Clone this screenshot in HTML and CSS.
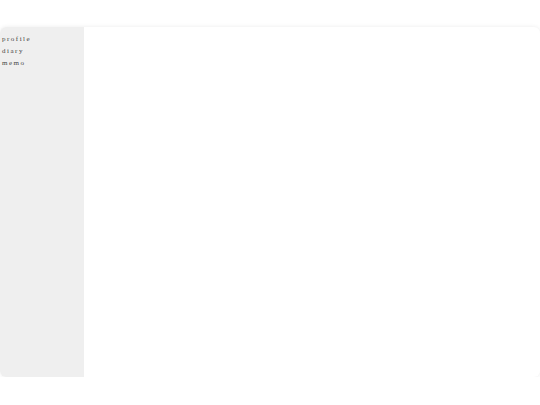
FILE: index.html
```html
<!DOCTYPE html>
<html>
<head>
<meta charset="utf-8">
<link rel="stylesheet" href="styles.css">
</head>
<body>
<div class="frame">
  <nav class="sidebar">
    <div class="item">profile</div>
    <div class="item">diary</div>
    <div class="item">memo</div>
  </nav>
  <main class="content"></main>
</div>
</body>
</html>
```
FILE: styles.css
```css
html, body {
  margin: 0;
  padding: 0;
  background: #ffffff;
}
body {
  padding-top: 27px;
}
.frame {
  display: flex;
  width: 540px;
  height: 350px;
  border-radius: 6px;
  overflow: hidden;
  background: #ffffff;
  box-shadow: 0 0 4px rgba(0, 0, 0, 0.08);
}
.sidebar {
  width: 84px;
  flex: none;
  background: #efefef;
  padding: 6px 2px;
  box-sizing: border-box;
}
.item {
  font-family: "Liberation Serif", serif;
  font-size: 7px;
  line-height: 12px;
  letter-spacing: 1.5px;
  color: #444444;
}
.content {
  flex: 1;
}
```
